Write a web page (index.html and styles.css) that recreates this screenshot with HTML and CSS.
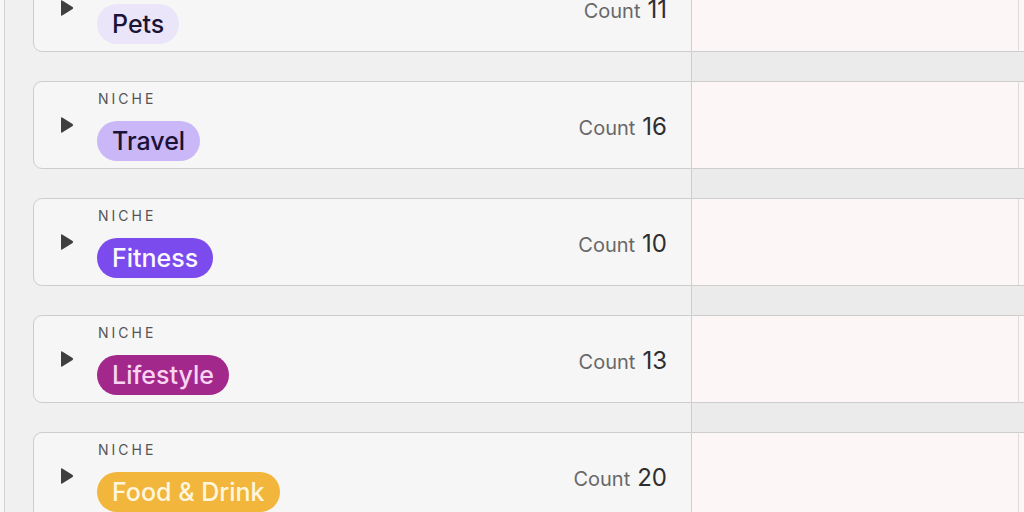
FILE: index.html
```html
<!DOCTYPE html>
<html>
<head>
<meta charset="utf-8">
<link rel="stylesheet" href="styles.css">
</head>
<body>
<div class="page">
  <div class="board">
    <div class="row">
      <div class="card">
        <span class="toggle"><svg width="14" height="18" viewBox="0 0 14 18"><path d="M2.2 1.4 Q1 0.8 1 2.2 V15.8 Q1 17.2 2.2 16.6 L12.6 9.9 Q13.6 9 12.6 8.1 Z" fill="#3f3f3f"/></svg></span>
        <div class="info">
          <div class="label">NICHE</div>
          <span class="pill pets">Pets</span>
        </div>
        <div class="count"><span class="count-label">Count</span><span class="count-num">11</span></div>
      </div>
      <div class="cell"></div>
      <div class="cell last"></div>
    </div>
    <div class="spacer"><div class="spacer-fill"></div></div>

    <div class="row">
      <div class="card">
        <span class="toggle"><svg width="14" height="18" viewBox="0 0 14 18"><path d="M2.2 1.4 Q1 0.8 1 2.2 V15.8 Q1 17.2 2.2 16.6 L12.6 9.9 Q13.6 9 12.6 8.1 Z" fill="#3f3f3f"/></svg></span>
        <div class="info">
          <div class="label">NICHE</div>
          <span class="pill travel">Travel</span>
        </div>
        <div class="count"><span class="count-label">Count</span><span class="count-num">16</span></div>
      </div>
      <div class="cell"></div>
      <div class="cell last"></div>
    </div>
    <div class="spacer"><div class="spacer-fill"></div></div>

    <div class="row">
      <div class="card">
        <span class="toggle"><svg width="14" height="18" viewBox="0 0 14 18"><path d="M2.2 1.4 Q1 0.8 1 2.2 V15.8 Q1 17.2 2.2 16.6 L12.6 9.9 Q13.6 9 12.6 8.1 Z" fill="#3f3f3f"/></svg></span>
        <div class="info">
          <div class="label">NICHE</div>
          <span class="pill fitness">Fitness</span>
        </div>
        <div class="count"><span class="count-label">Count</span><span class="count-num">10</span></div>
      </div>
      <div class="cell"></div>
      <div class="cell last"></div>
    </div>
    <div class="spacer"><div class="spacer-fill"></div></div>

    <div class="row">
      <div class="card">
        <span class="toggle"><svg width="14" height="18" viewBox="0 0 14 18"><path d="M2.2 1.4 Q1 0.8 1 2.2 V15.8 Q1 17.2 2.2 16.6 L12.6 9.9 Q13.6 9 12.6 8.1 Z" fill="#3f3f3f"/></svg></span>
        <div class="info">
          <div class="label">NICHE</div>
          <span class="pill lifestyle">Lifestyle</span>
        </div>
        <div class="count"><span class="count-label">Count</span><span class="count-num">13</span></div>
      </div>
      <div class="cell"></div>
      <div class="cell last"></div>
    </div>
    <div class="spacer"><div class="spacer-fill"></div></div>

    <div class="row">
      <div class="card">
        <span class="toggle"><svg width="14" height="18" viewBox="0 0 14 18"><path d="M2.2 1.4 Q1 0.8 1 2.2 V15.8 Q1 17.2 2.2 16.6 L12.6 9.9 Q13.6 9 12.6 8.1 Z" fill="#3f3f3f"/></svg></span>
        <div class="info">
          <div class="label">NICHE</div>
          <span class="pill food">Food &amp; Drink</span>
        </div>
        <div class="count"><span class="count-label">Count</span><span class="count-num">20</span></div>
      </div>
      <div class="cell"></div>
      <div class="cell last"></div>
    </div>
  </div>
</div>
</body>
</html>
```

FILE: styles.css
```css
* { box-sizing: border-box; }
html, body {
  margin: 0;
  padding: 0;
  height: 512px;
  overflow: hidden;
  background: #f7f7f7;
  font-family: Inter, "Liberation Sans", sans-serif;
}
.page {
  margin-left: 4px;
  border-left: 1px solid #d2d2d2;
  background: #f0f0f0;
  height: 512px;
  overflow: hidden;
}
.board {
  margin-top: -36px;
  padding-left: 28px;
  display: flex;
  flex-direction: column;
}
.row {
  display: flex;
  height: 88px;
}
.card {
  width: 659px;
  flex: none;
  display: flex;
  align-items: center;
  background: #f6f6f6;
  border: 1px solid #cdcdcd;
  border-radius: 9px 0 0 9px;
  padding: 0 24px 0 26px;
}
.toggle {
  display: flex;
  width: 14px;
  margin-right: 23px;
}
.info {
  display: flex;
  flex-direction: column;
  align-items: flex-start;
  padding-top: 0;
}
.label {
  font-size: 14px;
  line-height: 18px;
  letter-spacing: 3px;
  color: #555;
  font-weight: 400;
  margin-bottom: 13px;
  margin-left: 1px;
}
.pill {
  display: inline-block;
  height: 40px;
  line-height: 40px;
  padding: 0 15px;
  border-radius: 20px;
  font-size: 25px;
  font-weight: 500;
}
.pets { background: #ebe5fa; color: #1c1434; }
.travel { background: #cab7f7; color: #1b1236; }
.fitness { background: #7b4bee; color: #fbf8ff; }
.lifestyle { background: #a2288b; color: #f9d4f2; }
.food { background: #f1b63b; color: #fff6df; }
.count {
  margin-left: auto;
  display: flex;
  align-items: baseline;
  gap: 7px;
  padding-top: 2px;
}
.count-label {
  font-size: 20px;
  color: #686868;
}
.count-num {
  font-size: 24px;
  color: #2e2e2e;
}
.cell {
  width: 327px;
  flex: none;
  background: #fcf7f6;
  border-top: 1px solid #cdcdcd;
  border-bottom: 1px solid #cdcdcd;
  border-right: 1px solid #dcdcdc;
}
.cell.last {
  flex: 1;
  width: auto;
  border-right: none;
}
.spacer {
  height: 29px;
  padding-left: 658px;
  display: flex;
}
.spacer-fill {
  flex: 1;
  background: #ebebeb;
  border-left: 1px solid #cdcdcd;
}
```
